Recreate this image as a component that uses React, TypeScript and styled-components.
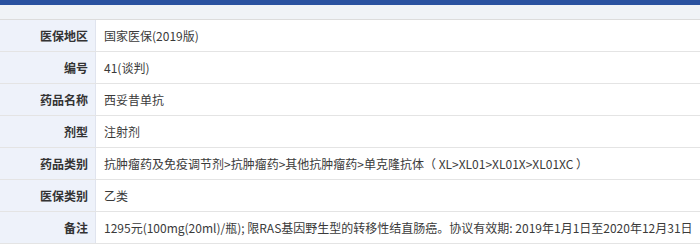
import React from 'react';
import styled, { createGlobalStyle } from 'styled-components';

const GlobalStyle = createGlobalStyle`
  html, body {
    margin: 0;
    padding: 0;
    background: #fff;
  }
  body {
    font-family: "Noto Sans CJK SC", "Liberation Sans", sans-serif;
    font-size: 12px;
    color: #333;
  }
`;

const Panel = styled.div`
  width: 700px;
  background: #fff;
`;

const TopBar = styled.div`
  height: 5px;
  background: #2a52a0;
`;

const SubBar = styled.div`
  height: 14px;
  background: #f0f3f7;
  border-bottom: 1px solid #dcdcdc;
`;

const Table = styled.div`
  display: flex;
  flex-direction: column;
`;

const Row = styled.div`
  display: grid;
  grid-template-columns: 96px 1fr;
  height: 31px;
  border-bottom: 1px solid #e4e4e4;
`;

const Label = styled.div`
  display: flex;
  align-items: center;
  justify-content: flex-end;
  padding-right: 7px;
  background: #eef2fa;
  border-right: 1px solid #e0e4ee;
  font-weight: 700;
  color: #333;
  white-space: nowrap;
`;

const Value = styled.div`
  display: flex;
  align-items: center;
  padding-left: 8px;
  color: #3a3a3a;
  white-space: nowrap;
  overflow: hidden;
`;

interface Item {
  label: string;
  value: string;
}

const items: Item[] = [
  { label: '医保地区', value: '国家医保(2019版)' },
  { label: '编号', value: '41(谈判)' },
  { label: '药品名称', value: '西妥昔单抗' },
  { label: '剂型', value: '注射剂' },
  {
    label: '药品类别',
    value: '抗肿瘤药及免疫调节剂>抗肿瘤药>其他抗肿瘤药>单克隆抗体（ XL>XL01>XL01X>XL01XC ）',
  },
  { label: '医保类别', value: '乙类' },
  {
    label: '备注',
    value: '1295元(100mg(20ml)/瓶); 限RAS基因野生型的转移性结直肠癌。协议有效期: 2019年1月1日至2020年12月31日',
  },
];

const App: React.FC = () => {
  return (
    <>
      <GlobalStyle />
      <Panel>
        <TopBar />
        <SubBar />
        <Table>
          {items.map(item => (
            <Row key={item.label}>
              <Label>{item.label}</Label>
              <Value>{item.value}</Value>
            </Row>
          ))}
        </Table>
      </Panel>
    </>
  );
};

export default App;
